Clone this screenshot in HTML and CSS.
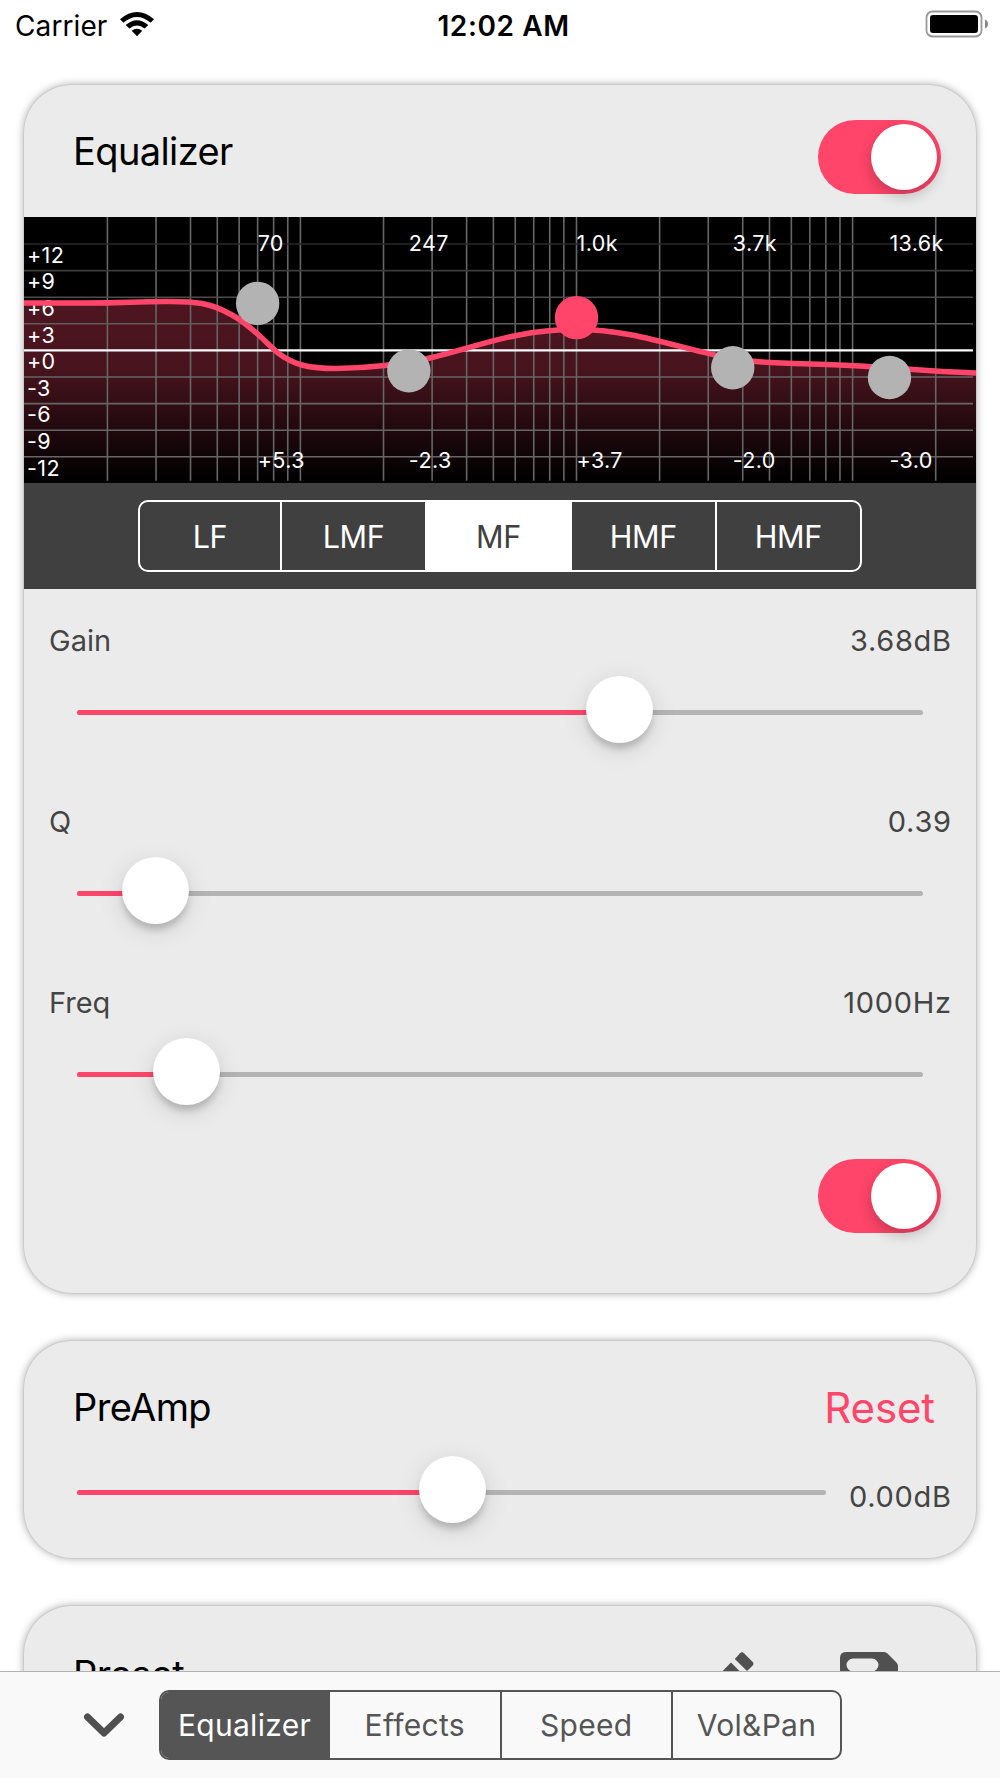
FILE: index.html
```html
<!DOCTYPE html>
<html lang="en">
<head>
  <meta charset="UTF-8" />
  <meta name="viewport" content="width=device-width, initial-scale=1.0" />
  <title>Equalizer</title>
  <link rel="stylesheet" href="styles.css">
</head>
<body>

  <!-- Status bar -->
  <header class="status">
    <div class="carrier">
      <span>Carrier</span>
      <svg width="34" height="25" viewBox="0 0 34 25">
        <path d="M0 7.200Q17 -7.200 34 7.200L30.600 10.700Q17 -.9 3.400 10.700Z" />
        <path d="M5.700 12.900Q17 3.400 28.300 12.900L24.600 16.500Q17 10.500 9.400 16.500Z" />
        <path d="M11.700 18.700Q17 14.600 22.300 18.700L17 24.200Z" />
      </svg>
    </div>
    <div class="time">12:02 AM</div>
    <svg class="battery" width="64" height="28" viewBox="0 0 64 28">
      <rect x="1.500" y="1.500" width="55" height="25" rx="6" fill="none" stroke="#999" stroke-width="1.800" />
      <rect x="5" y="5" width="48" height="18" rx="3" />
      <path d="M60 9.500Q63 11 63 14T60 18.500Z" fill="#888" />
    </svg>
  </header>

  <main>
    <section class="card">
      <div class="head">
        <h2>Equalizer</h2>
        <div class="switch"><i></i></div>
      </div>

      <svg class="graph" width="952" height="266" viewBox="0 0 952 266">
        <defs>
          <linearGradient id="area" x1="0" y1="80" x2="0" y2="262" gradientUnits="userSpaceOnUse">
            <stop offset="0" stop-color="#ff4569" stop-opacity=".31" />
            <stop offset=".4" stop-color="#ff4569" stop-opacity=".28" />
            <stop offset="1" stop-color="#ff4569" stop-opacity="0" />
          </linearGradient>
        </defs>
        <path fill="url(#area)" d="M0 86H60C100 86 110 84.500 140 84.500C172 84 187 86 208 98C228 109 240 124 254 136C270 148 285 151.500 312 151.500C345 151 375 148 406 141C450 131 490 112.500 552 112.500C610 112.500 650 130 700 140C730 147 780 146 836 149C870 150.500 900 154 952 156V266H0Z" />
        <g id="grid"></g>
        <g id="scale" class="scale"></g>
        <path class="curve" d="M0 86H60C100 86 110 84.500 140 84.500C172 84 187 86 208 98C228 109 240 124 254 136C270 148 285 151.500 312 151.500C345 151 375 148 406 141C450 131 490 112.500 552 112.500C610 112.500 650 130 700 140C730 147 780 146 836 149C870 150.500 900 154 952 156" />
        <g id="bands" class="scale"></g>
      </svg>

      <div class="bandbar">
        <div class="segment light">
          <button>LF</button>
          <button>LMF</button>
          <button class="active">MF</button>
          <button>HMF</button>
          <button>HMF</button>
        </div>
      </div>

      <div class="param">
        <div class="label"><span>Gain</span><span class="value">3.68dB</span></div>
        <div class="slider"><b style="width: 64.2%"></b><i style="left: 64.2%"></i></div>
      </div>
      <div class="param">
        <div class="label"><span>Q</span><span class="value">0.39</span></div>
        <div class="slider"><b style="width: 9.3%"></b><i style="left: 9.3%"></i></div>
      </div>
      <div class="param">
        <div class="label"><span>Freq</span><span class="value">1000Hz</span></div>
        <div class="slider"><b style="width: 13%"></b><i style="left: 13%"></i></div>
      </div>
      <div class="foot">
        <div class="switch"><i></i></div>
      </div>
    </section>

    <section class="card preamp">
      <div class="head">
        <h2>PreAmp</h2>
        <a class="reset">Reset</a>
      </div>
      <div class="row">
        <div class="slider"><b style="width: 50.2%"></b><i style="left: 50.2%"></i></div>
        <span class="value">0.00dB</span>
      </div>
    </section>

    <section class="card preset">
      <div class="head">
        <h2>Preset</h2>
        <div class="tools">
          <svg width="56" height="56" viewBox="0 0 56 56">
            <path d="M41 1.200Q43 -.8 45 1.200L53.500 9.700Q55.500 11.700 53.500 13.700L48 19L35.800 6.900Z" />
            <path d="M32 10.500L44.200 22.700L14 53L1 55L2 41Z" />
          </svg>
          <svg width="58" height="58" viewBox="0 0 58 58">
            <path fill-rule="evenodd" d="M6 0H44Q46 0 47.500 1.500L56.500 10.500Q58 12 58 14V52Q58 58 52 58H6Q0 58 0 52V6Q0 0 6 0ZM13 6.500A6.500 6.500 0 0 0 13 19.500H32A6.500 6.500 0 0 0 32 6.500Z" />
          </svg>
        </div>
      </div>
    </section>
  </main>

  <nav class="tabbar">
    <svg class="chevron" width="42" height="26" viewBox="0 0 42 26">
      <path d="M4.500 5L21 21L37.500 5" />
    </svg>
    <div class="segment dark">
      <button class="active">Equalizer</button>
      <button>Effects</button>
      <button>Speed</button>
      <button>Vol&amp;Pan</button>
    </div>
  </nav>

  <script>
    const bands = [
      { freq: 70, label: '70', gain: '+5.3', db: 5.3 },
      { freq: 247, label: '247', gain: '-2.3', db: -2.3 },
      { freq: 1000, label: '1.0k', gain: '+3.7', db: 3.7, active: true },
      { freq: 3680, label: '3.7k', gain: '-2.0', db: -1.95 },
      { freq: 13600, label: '13.6k', gain: '-3.0', db: -3.05 }
    ];

    // log scale from 10 Hz, 3 dB per grid row
    const xOf = f => 276.1 * Math.log10(f / 10) + 0.3;
    const yOf = db => 133.4 - db * 26.6 / 3;

    let grid = '';
    for (let base = 10; base <= 10000; base *= 10) {
      for (let n = 2; n <= 10; n++) {
        const f = base * n;
        if (f > 20000) break;
        const x = xOf(f);
        grid += `<line x1="${x}" x2="${x}" y1="0" y2="263.7" stroke="#666" stroke-width="1.6" />`;
      }
    }
    const shades = { 12: '#282828', 9: '#3c3c3c', 6: '#4c4c4c', 3: '#5c5c5c', 0: '#fff' };
    let scale = '';
    for (let db = 12; db >= -12; db -= 3) {
      const y = yOf(db);
      grid += `<line x1="0" x2="949" y1="${y}" y2="${y}" stroke="${shades[db] || '#666'}" stroke-width="${db ? 1.6 : 2.4}" />`;
      scale += `<text x="3" y="${y + 18.8}">${db >= 0 ? '+' : ''}${db}</text>`;
    }
    document.getElementById('grid').innerHTML = grid;
    document.getElementById('scale').innerHTML = scale;

    document.getElementById('bands').innerHTML = bands.map(b => {
      const x = xOf(b.freq);
      return `<circle cx="${x}" cy="${yOf(b.db)}" r="21.7" fill="${b.active ? '#ff4569' : '#b3b3b3'}" />
        <text x="${x}" y="33.6">${b.label}</text>
        <text x="${x}" y="250.8">${b.gain}</text>`;
    }).join('');
  </script>
</body>
</html>
```
FILE: styles.css
```css
* { margin: 0; padding: 0; box-sizing: border-box; }
body {
  font-family: 'Inter', sans-serif;
  background: #fff;
  color: #000;
  height: 1778px;
  overflow: hidden;
}
svg { display: block; }

/* Status bar */
.status {
  display: grid;
  grid-template-columns: 1fr auto 1fr;
  align-items: center;
  height: 51px;
  padding: 0 11px 0 15px;
  font-size: 28px;
}
.carrier {
  display: flex;
  align-items: center;
  gap: 13px;
  letter-spacing: 0.1px;
}
.carrier svg { margin-bottom: 3px; }
.time {
  font-weight: 600;
  letter-spacing: 0.6px;
  padding-left: 3px;
}
.battery {
  justify-self: end;
  margin-bottom: 3px;
}

main { padding: 33.5px 24px 0; }
.card {
  background: #ebebeb;
  border-radius: 48px;
  margin-bottom: 48px;
  box-shadow: 0 0 0 1px rgba(0, 0, 0, 0.04), 0 0 9px rgba(0, 0, 0, 0.38);
}
.head {
  display: flex;
  justify-content: space-between;
  align-items: center;
  height: 132.5px;
  padding: 0 35px 0 49px;
}
h2 {
  font-size: 38px;
  font-weight: 400;
  letter-spacing: -0.6px;
}
.head .switch { margin-top: 12px; }

.switch {
  position: relative;
  width: 123px;
  height: 74px;
  border-radius: 37px;
  background: #ff4569;
}
.switch i {
  position: absolute;
  top: 4px;
  right: 4.5px;
  width: 66px;
  height: 66px;
  border-radius: 50%;
  background: #fff;
  box-shadow: 0 6px 14px rgba(0, 0, 0, 0.22);
}

/* Response graph */
.graph { background: #000; }
.scale text {
  fill: #fff;
  font-size: 21.5px;
  letter-spacing: 0.4px;
}
.curve {
  fill: none;
  stroke: #ff4569;
  stroke-width: 5.5;
}
.bandbar {
  display: flex;
  justify-content: center;
  align-items: center;
  height: 106px;
  background: #404040;
}

.segment {
  display: grid;
  overflow: hidden;
  border: 2.5px solid;
  border-radius: 10px;
}
.segment button {
  border: 0;
  border-left: 2.5px solid;
  background: none;
  font-family: inherit;
  color: inherit;
}
.segment button:first-child { border-left: 0; }
.light {
  grid-template-columns: 140px 145px 145px 144.5px 1fr;
  width: 724px;
  height: 72px;
  color: #fff;
  border-color: #fff;
}
.light button {
  font-size: 30.5px;
  letter-spacing: -0.4px;
  border-color: #fff;
}
.light .active {
  background: #fff;
  color: #404040;
}
.dark {
  grid-template-columns: 167px 171.5px 171.5px 1fr;
  width: 683px;
  height: 70px;
  color: #555;
  border-color: #555;
}
.dark button {
  font-size: 30px;
  letter-spacing: 0.3px;
  border-color: #555;
}
.dark .active {
  background: #555;
  color: #fff;
}

/* Sliders */
.param {
  height: 181px;
  padding: 31.5px 25px 0;
}
.label {
  display: flex;
  justify-content: space-between;
  line-height: 40px;
  margin-bottom: 15.5px;
  font-size: 29px;
  color: #444;
}
.value {
  font-size: 29px;
  letter-spacing: 0.7px;
  margin-right: -0.7px;
  color: #444;
}
.slider {
  position: relative;
  height: 5px;
  margin: 34px 28.5px 0 28px;
  border-radius: 3px;
  background: #b4b4b4;
}
.label + .slider { top: 15px; }
.slider b {
  display: block;
  height: 5px;
  border-radius: 3px;
  background: #ff4569;
}
.slider i {
  position: absolute;
  top: -34px;
  width: 67px;
  height: 67px;
  margin-left: -33.5px;
  border-radius: 50%;
  background: #fff;
  box-shadow: 0 7px 6px -1px rgba(0, 0, 0, 0.17), 0 6px 26px rgba(0, 0, 0, 0.12);
}
.foot {
  display: flex;
  justify-content: flex-end;
  height: 160.5px;
  padding: 27px 35px 0 0;
}

.preamp { height: 217.5px; }
.preamp .head {
  padding-top: 1px;
  padding-right: 41px;
}
.reset {
  font-size: 42px;
  letter-spacing: -0.1px;
  color: #ff4569;
}
.row {
  display: flex;
  justify-content: space-between;
  padding-right: 25px;
}
.row .slider {
  width: 749px;
  margin: 17px 0 0 53px;
}
.row .value { line-height: 48px; }

.preset {
  height: 172px;
  margin-bottom: 0;
}
.preset .head {
  padding-right: 78px;
  align-items: flex-start;
  padding-top: 46px;
}
.preset h2 { line-height: 44px; }
.tools {
  display: flex;
  gap: 85px;
  fill: #505050;
}

/* Bottom bar */
.tabbar {
  position: fixed;
  left: 0;
  bottom: 0;
  width: 100%;
  height: 107px;
  display: flex;
  align-items: center;
  padding-left: 83px;
  background: #f9f9f9;
  border-top: 1px solid #b2b2b2;
}
.chevron {
  margin-right: 34px;
  fill: none;
  stroke: #505050;
  stroke-width: 7;
  stroke-linecap: round;
  stroke-linejoin: round;
}
```
